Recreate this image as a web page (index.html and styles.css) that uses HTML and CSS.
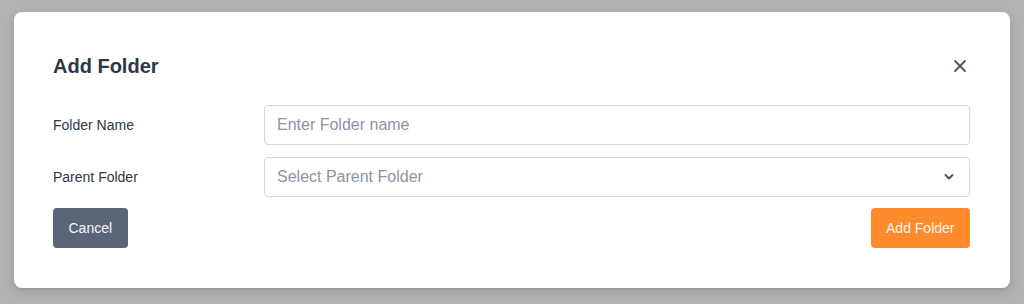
FILE: index.html
```html
<!DOCTYPE html>
<html lang="en">
<head>
<meta charset="utf-8">
<title>Add Folder</title>
<link rel="stylesheet" href="styles.css">
</head>
<body>
<div class="overlay">
  <div class="modal">
    <div class="modal-header">
      <h2 class="modal-title">Add Folder</h2>
      <button class="close-btn" aria-label="Close">
        <svg width="12" height="12" viewBox="0 0 12 12"><path d="M1 1L11 11M11 1L1 11" stroke="#4a5568" stroke-width="1.8" stroke-linecap="round"/></svg>
      </button>
    </div>
    <div class="form-row">
      <label class="form-label">Folder Name</label>
      <input class="form-input" type="text" placeholder="Enter Folder name">
    </div>
    <div class="form-row">
      <label class="form-label">Parent Folder</label>
      <div class="select-wrap">
        <div class="form-input select">Select Parent Folder</div>
        <svg class="chevron" width="12" height="8" viewBox="0 0 12 8"><path d="M2.5 2L6 5.5L9.5 2" fill="none" stroke="#4a5568" stroke-width="2" stroke-linecap="round" stroke-linejoin="round"/></svg>
      </div>
    </div>
    <div class="actions">
      <button class="btn btn-cancel">Cancel</button>
      <button class="btn btn-primary">Add Folder</button>
    </div>
  </div>
</div>
</body>
</html>
```

FILE: styles.css
```css
* { box-sizing: border-box; }
html, body {
  margin: 0;
  padding: 0;
  background: #b2b2b2;
  font-family: "Liberation Sans", Arial, sans-serif;
  color: #2d3748;
}
.overlay {
  width: 1024px;
  height: 304px;
  padding: 12px 14px 0 14px;
}
.modal {
  background: #ffffff;
  border-radius: 8px;
  height: 276px;
  padding: 42px 40px 39px 39px;
  box-shadow: 0 4px 12px rgba(0,0,0,0.12), 0 1px 3px rgba(0,0,0,0.08);
}
.modal-header {
  display: flex;
  align-items: center;
  justify-content: space-between;
  height: 24px;
  margin-bottom: 27px;
}
.modal-title {
  margin: 0;
  font-size: 20px;
  line-height: 24px;
  font-weight: 700;
  color: #2d3748;
}
.close-btn {
  width: 32px;
  height: 32px;
  margin-right: -6px;
  border: none;
  background: transparent;
  display: flex;
  align-items: center;
  justify-content: center;
  padding: 0;
}
.form-row {
  display: flex;
  align-items: center;
  margin-bottom: 12px;
}
.form-label {
  width: 211px;
  flex: none;
  font-size: 14px;
  color: #2d3748;
}
.form-input {
  flex: 1;
  height: 40px;
  border: 1px solid #d3d9e2;
  border-radius: 4px;
  padding: 0 12px;
  font-family: "Liberation Sans", Arial, sans-serif;
  font-size: 16px;
  color: #2d3748;
  background: #fff;
  outline: none;
}
.form-input::placeholder { color: #8a94a6; }
.select-wrap {
  flex: 1;
  position: relative;
  display: flex;
}
.select {
  display: flex;
  align-items: center;
  color: #8a94a6;
}
.chevron {
  position: absolute;
  right: 15px;
  top: 16px;
}
.actions {
  display: flex;
  justify-content: space-between;
  margin-top: -1px;
}
.btn {
  height: 40px;
  border: none;
  border-radius: 4px;
  padding: 0 15.5px;
  font-family: "Liberation Sans", Arial, sans-serif;
  font-size: 14px;
  color: #f4f5f7;
}
.btn-cancel { background: #5a6578; }
.btn-primary { background: #ff8a2b; color: #fff6ee; }
```
